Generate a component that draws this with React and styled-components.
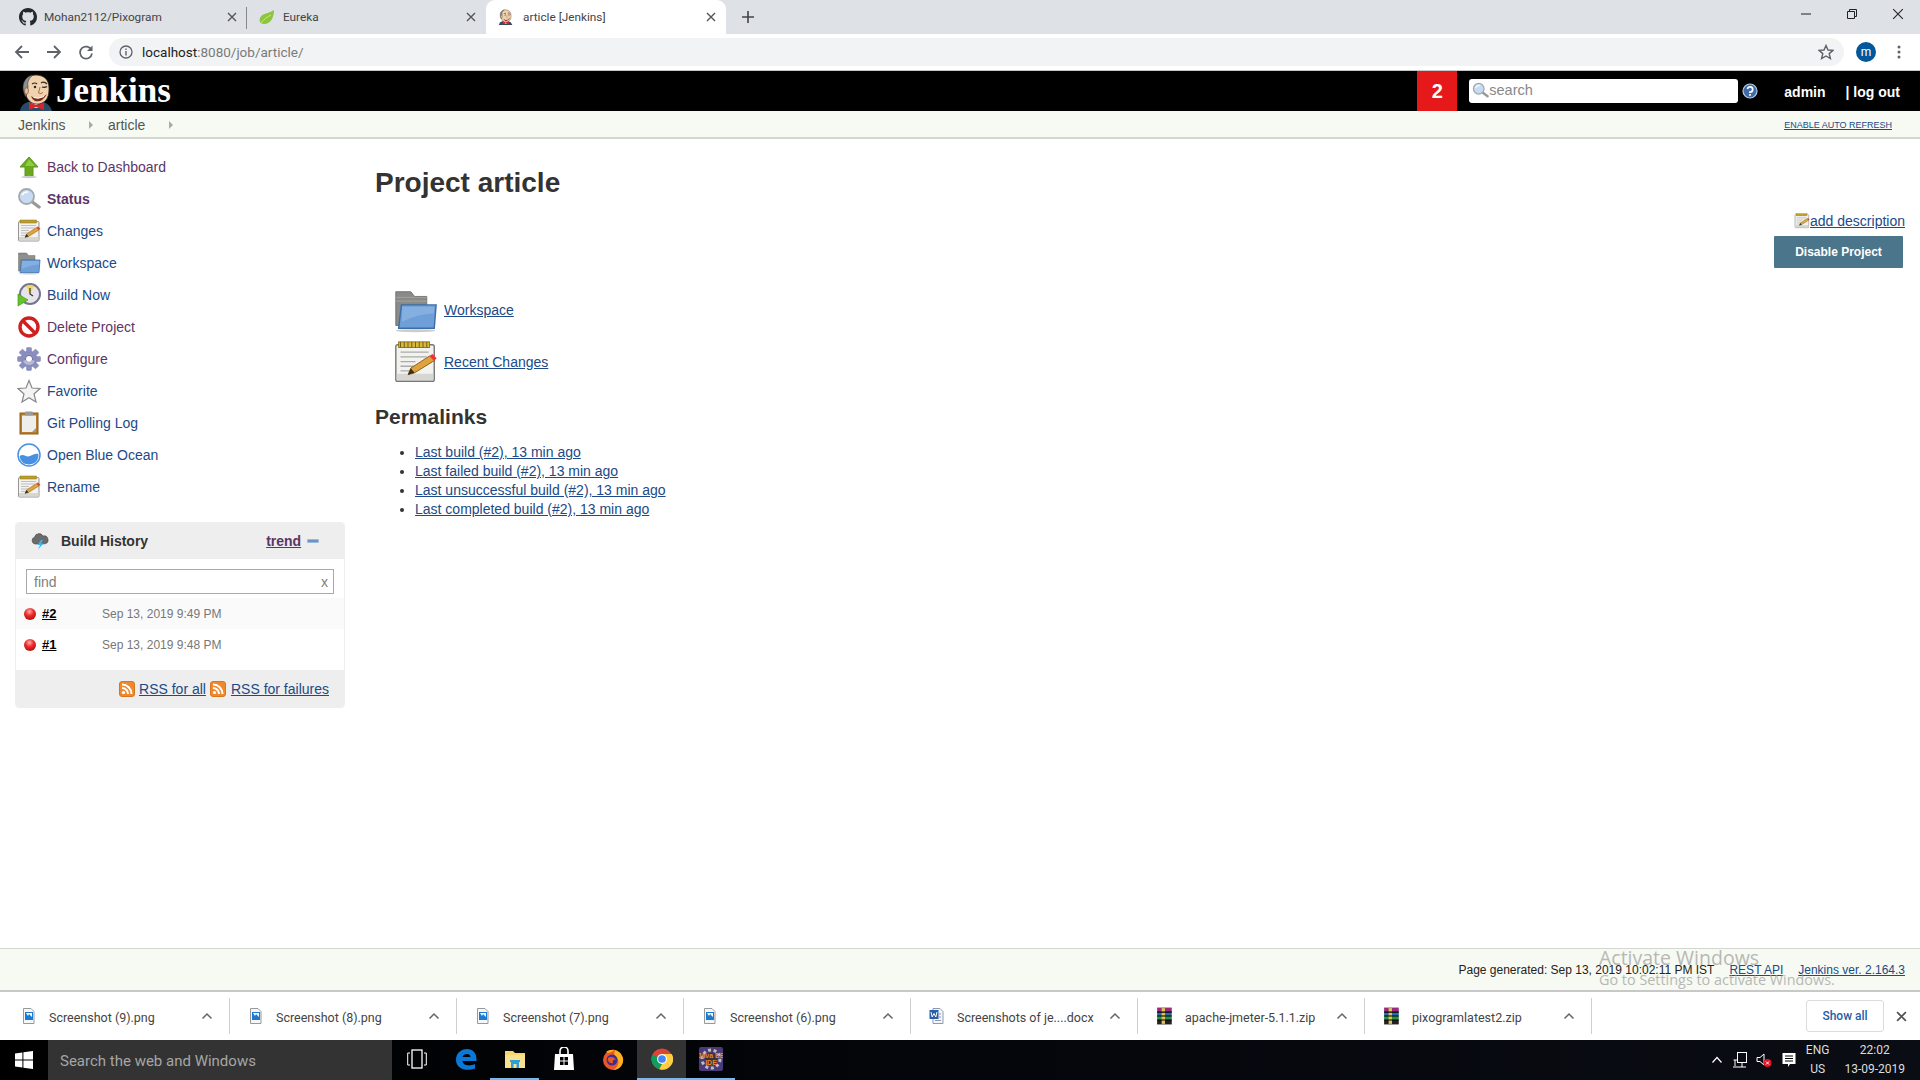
import React from 'react'
import styled, { createGlobalStyle } from 'styled-components'

const GlobalStyle = createGlobalStyle`
  html, body {
    margin: 0;
    padding: 0;
    background: #fff;
  }
  * {
    box-sizing: border-box;
  }
`

const Page = styled.div`
  position: relative;
  width: 1920px;
  height: 1080px;
  overflow: hidden;
  display: flex;
  flex-direction: column;
  font-family: "Liberation Sans", Arial, sans-serif;
  font-size: 14px;
  color: #333;
`

// browser chrome
const TabStrip = styled.div`
  height: 34px;
  flex: none;
  display: flex;
  align-items: stretch;
  background: #dee1e6;
  font-family: Roboto, "Open Sans", sans-serif;
  font-size: 11.8px;
  color: #444;
`
const Tab = styled.div`
  width: ${props => props.width}px;
  flex: none;
  display: flex;
  align-items: center;
  gap: ${props => props.gap}px;
  padding: 0 10px 0 ${props => props.pad}px;
  background: ${props => props.active ? '#fff' : 'transparent'};
  border-radius: ${props => props.active ? '9px 9px 0 0' : '0'};
  position: relative;
  &::after {
    content: '';
    display: ${props => props.divider ? 'block' : 'none'};
    position: absolute;
    right: 0;
    top: 7px;
    bottom: 5px;
    width: 1px;
    background: #888;
  }
`
const TabTitle = styled.span`
  flex: 1;
  white-space: nowrap;
`
const NewTab = styled.div`
  width: 44px;
  display: flex;
  align-items: center;
  justify-content: center;
`
const WindowControls = styled.div`
  margin-left: auto;
  display: flex;
  align-items: center;
  gap: 34px;
  padding: 0 16px 6px 0;
`
const Toolbar = styled.div`
  height: 37px;
  flex: none;
  display: flex;
  align-items: center;
  background: #fff;
  border-bottom: 1px solid #c8c8c8;
  padding-left: 14px;
`
const NavButtons = styled.div`
  display: flex;
  gap: 16px;
  align-items: center;
`
const Omnibox = styled.div`
  width: 1735px;
  height: 28px;
  margin-left: 15px;
  border-radius: 14px;
  background: #f1f3f4;
  display: flex;
  align-items: center;
  padding: 0 10px 0 10px;
  font-family: Roboto, "Open Sans", sans-serif;
  font-size: 13.5px;
  color: #7a7a7a;
`
const Host = styled.span`
  color: #222;
  margin-left: 9px;
`
const OmniStar = styled.span`
  margin-left: auto;
  display: flex;
`
const Avatar = styled.div`
  width: 20px;
  height: 20px;
  border-radius: 50%;
  margin-left: 12px;
  flex: none;
  background: #01579b;
  color: #fff;
  font-family: Roboto, sans-serif;
  font-size: 12px;
  display: flex;
  align-items: center;
  justify-content: center;
`
const Dots = styled.div`
  margin-left: 21px;
  display: flex;
`

// jenkins header
const Header = styled.header`
  height: 40px;
  flex: none;
  background: #000;
  display: flex;
  align-items: stretch;
  padding-left: 18px;
  color: #fff;
`
const Logo = styled.div`
  display: flex;
  align-items: flex-end;
`
const LogoTitle = styled.span`
  font-family: "Liberation Serif", serif;
  font-weight: 700;
  font-size: 35px;
  line-height: 40px;
  align-self: center;
`
const HeaderRight = styled.div`
  margin-left: auto;
  display: flex;
  align-items: center;
  height: 100%;
`
const Badge = styled.div`
  width: 40px;
  height: 100%;
  background: #e51919;
  font-weight: 700;
  font-size: 20px;
  display: flex;
  align-items: center;
  justify-content: center;
`
const SearchBox = styled.div`
  width: 269px;
  height: 24px;
  margin-left: 12px;
  background: #fff;
  border-radius: 3px;
  display: flex;
  align-items: center;
  gap: 0;
  padding: 0 0 2px 3px;
  color: #888;
  font-size: 14.5px;
`
const HelpIcon = styled.span`
  display: flex;
  margin-left: 4px;
`
const UserLink = styled.span`
  font-weight: 700;
  font-size: 14px;
  margin-left: ${props => props.left}px;
  padding-top: 2px;
`
const LogOut = styled(UserLink)`
  margin-right: 20px;
`
const Breadcrumbs = styled.nav`
  height: 28px;
  flex: none;
  background: #f6faf2;
  border-bottom: 2px solid #d3d7cf;
  display: flex;
  align-items: center;
  padding: 1px 28px 0 18px;
  color: #555;
`
const Crumb = styled.span`
  width: ${props => props.width}px;
  display: flex;
  align-items: center;
  justify-content: space-between;
  margin-right: ${props => props.gap}px;
`
const Arrow = styled.span`
  width: 0;
  height: 0;
  border-left: 4px solid #aaa;
  border-top: 4px solid transparent;
  border-bottom: 4px solid transparent;
`
const AutoRefresh = styled.a`
  margin-left: auto;
  font-size: 9px;
  color: #204a87;
  text-decoration: underline;
`

// page body
const Body = styled.div`
  flex: 1;
  display: flex;
  min-height: 0;
`
const Sidebar = styled.aside`
  width: 360px;
  flex: none;
  padding: 12px 0 0 15px;
`
const TaskList = styled.div`
  display: flex;
  flex-direction: column;
`
const Task = styled.a`
  height: 32px;
  display: flex;
  align-items: center;
  gap: 6px;
  padding-left: 2px;
  color: ${props => props.visited ? '#5c3566' : '#204a87'};
  font-weight: ${props => props.bold ? 700 : 400};
`
const HistoryPanel = styled.section`
  width: 330px;
  margin-top: 19px;
  border: 1px solid #eee;
  border-radius: 4px;
  overflow: hidden;
`
const HistoryHead = styled.div`
  height: 36px;
  background: #eee;
  display: flex;
  align-items: center;
  padding: 0 0 1px 15px;
  font-weight: 700;
`
const HistoryTitle = styled.span`
  margin-left: 12px;
  color: #333;
`
const Trend = styled.a`
  margin-left: 118px;
  color: #5c3566;
  text-decoration: underline;
`
const Collapse = styled.span`
  width: 12px;
  height: 4px;
  margin-left: 6px;
  border-radius: 1px;
  background: #6a94c4;
  border: 1px solid #9db8d8;
`
const FindRow = styled.div`
  padding: 10px 10px 4px;
`
const FindBox = styled.div`
  height: 25px;
  border: 1px solid #aaa;
  display: flex;
  align-items: center;
  justify-content: space-between;
  padding: 0 5px 0 7px;
  color: #808080;
`
const BuildRow = styled.div`
  height: ${props => props.size}px;
  background: ${props => props.shaded ? '#fafafa' : '#fff'};
  display: flex;
  align-items: center;
  padding-left: 7px;
`
const BuildNumber = styled.a`
  width: 60px;
  margin-left: 5px;
  color: #000;
  font-size: 13px;
  font-weight: 700;
  text-decoration: underline;
`
const BuildDate = styled.span`
  font-size: 12px;
  color: #777;
`
const HistoryFoot = styled.div`
  height: 37px;
  margin-top: 10px;
  background: #eee;
  display: flex;
  align-items: center;
  justify-content: flex-end;
  padding-right: 15px;
  gap: 4px;
`
const Link = styled.a`
  color: #204a87;
  text-decoration: underline;
`
const RssLink = styled(Link)`
  margin-left: 1px;
`
const Content = styled.main`
  flex: 1;
  padding: 25px 15px 0 15px;
  display: flex;
  justify-content: space-between;
`
const Title = styled.h1`
  margin: 0;
  font-size: 28px;
  line-height: 38px;
  color: #333;
  font-weight: 700;
`
const ProjectLinks = styled.div`
  margin-top: 82px;
  padding-left: 18px;
  display: flex;
  flex-direction: column;
`
const ProjectLink = styled.div`
  height: ${props => props.size}px;
  display: flex;
  align-items: center;
  gap: 6px;
`
const Subtitle = styled.h2`
  margin: 15px 0 0;
  font-size: 21px;
  line-height: 28px;
  font-weight: 700;
  color: #333;
`
const Permalinks = styled.ul`
  margin: 12px 0 0;
  padding: 0 0 0 40px;
  li {
    line-height: 19px;
  }
`
const Actions = styled.div`
  display: flex;
  flex-direction: column;
  align-items: flex-end;
  padding-top: 46px;
`
const AddDescription = styled.div`
  display: flex;
  align-items: center;
  height: 22px;
`
const DisableButton = styled.button`
  width: 129px;
  height: 32px;
  margin: 4px 2px 0 0;
  border: 0;
  border-radius: 1px;
  background: #4b758b;
  color: #fff;
  font-family: inherit;
  font-weight: 700;
  font-size: 12px;
`

// footer
const Footer = styled.footer`
  height: 44px;
  flex: none;
  background: #f6faf2;
  border-top: 1px solid #d3d7cf;
  border-bottom: 2px solid #c8c8c8;
  display: flex;
  align-items: center;
  justify-content: flex-end;
  gap: 15px;
  padding: 0 15px 0 0;
  font-size: 12px;
  color: #222;
`
const Watermark = styled.div`
  position: absolute;
  left: 1599px;
  top: 946px;
  color: #a3a3a3;
  opacity: 0.75;
  font-family: "Open Sans", sans-serif;
  font-size: 19.5px;
  line-height: 24px;
  span {
    display: block;
    margin-top: 2px;
    font-size: 14.4px;
    line-height: 16px;
  }
`

// downloads shelf
const Shelf = styled.div`
  height: 48px;
  flex: none;
  background: #fff;
  display: flex;
  align-items: center;
  font-family: Roboto, "Open Sans", sans-serif;
  font-size: 12.5px;
  color: #444;
  padding-left: 3px;
`
const ShelfItem = styled.div`
  width: 227px;
  height: 36px;
  flex: none;
  display: flex;
  align-items: center;
  padding: 0 16px 0 18px;
  border-right: 1px solid #d0d0d0;
`
const ShelfName = styled.span`
  margin-left: ${props => props.gap}px;
  padding-top: 2px;
  flex: 1;
  white-space: nowrap;
`
const ShowAll = styled.button`
  width: 78px;
  height: 32px;
  margin-left: auto;
  background: #fff;
  border: 1px solid #dadce0;
  border-radius: 3px;
  color: #1f5fa8;
  font-family: Roboto, sans-serif;
  font-size: 12px;
  font-weight: 500;
`
const ShelfClose = styled.span`
  display: flex;
  margin: 0 13px 0 12px;
`

// taskbar
const Taskbar = styled.div`
  height: 40px;
  flex: none;
  background: linear-gradient(90deg, #000 0%, #05070d 60%, #0b0d14 100%);
  display: flex;
  align-items: stretch;
  color: #ddd;
  font-family: Roboto, "Open Sans", sans-serif;
`
const StartButton = styled.div`
  width: 48px;
  display: flex;
  align-items: center;
  justify-content: center;
`
const TaskSearch = styled.div`
  width: 344px;
  background: #333;
  color: #a6a6a6;
  font-size: 15px;
  display: flex;
  align-items: center;
  padding: 1px 0 0 12px;
`
const TaskApp = styled.div`
  width: 49px;
  display: flex;
  align-items: center;
  justify-content: center;
  background: ${props => props.active ? '#333' : 'transparent'};
  border-bottom: ${props => props.running ? '2px solid #76b9ed' : '2px solid transparent'};
`
const Tray = styled.div`
  margin-left: auto;
  display: flex;
  align-items: center;
  padding-right: 15px;
`
const TrayIcon = styled.span`
  display: flex;
  margin-left: ${props => props.left}px;
`
const TrayText = styled.div`
  font-size: 12px;
  line-height: 19px;
  text-align: center;
  margin-left: ${props => props.left}px;
  white-space: nowrap;
`

/* ---- drawn icons ---- */
const Icon = ({ size = 24, box = 24, children }) => (
  <svg width={size} height={size} viewBox={`0 0 ${box} ${box}`} style={{ display: 'block', flex: 'none' }}>
    {children}
  </svg>
)

const ArrowUpIcon = () => (
  <Icon>
    <path d="M12 2 L21 12 H16 V21 H8 V12 H3 Z" fill="#6aa820" stroke="#5a9a18" />
    <path d="M12 4 L18 11 H8 Z" fill="#8ccf3c" />
    <ellipse cx="12" cy="22" rx="8" ry="1.2" fill="#ccc" />
  </Icon>
)
const SearchIcon = ({ size = 24 }) => (
  <Icon size={size}>
    <path d="M14 14 L22 20" stroke="#999" strokeWidth="3.4" strokeLinecap="round" />
    <circle cx="9.5" cy="9.5" r="7.5" fill="#c7dcf2" stroke="#a3a8ad" strokeWidth="1.8" />
    <path d="M5 8 Q7 4.5 11 5" stroke="#fff" strokeWidth="1.6" fill="none" />
  </Icon>
)
const NotepadIcon = ({ size = 24 }) => (
  <Icon size={size} box={48}>
    <rect x="3" y="5" width="41" height="39" rx="2" fill="#f2f2ee" stroke="#777" strokeWidth="1.5" />
    <rect x="4" y="36" width="39" height="7" fill="#d6d6d2" />
    <rect x="6" y="2" width="33" height="6" fill="#d7b73c" stroke="#8d7310" />
    <path d="M8 2 V8 M12 2 V8 M16 2 V8 M20 2 V8 M24 2 V8 M28 2 V8 M32 2 V8 M36 2 V8" stroke="#6d5a10" strokeWidth="1" />
    <path d="M8 13 H38 M8 18 H36 M8 23 H24 M8 28 H26 M8 33 H20" stroke="#aaa" strokeWidth="1.4" />
    <path d="M16 37 L19 30 L39 17 L44 22 L23 35 Z" fill="#e0a23c" stroke="#8f5a14" />
    <path d="M39 17 L44 22 L46.5 19.5 L42 15 Z" fill="#e33" />
    <path d="M16 37 L19 30 L23 35 Z" fill="#332" />
  </Icon>
)
const FolderIcon = ({ size = 24 }) => (
  <Icon size={size} box={48}>
    <path d="M3 4 H19 L23 9 H36 V40 H3 Z" fill="#8a8a88" stroke="#6f6f6d" />
    <path d="M3 10 H36 M3 14 H36" stroke="#a3a3a1" />
    <path d="M9 18 H46 L44 43 H6 Z" fill="#6f9fd8" stroke="#3a6ea5" strokeWidth="1.5" />
    <path d="M10 20 H44 L43.6 27 Q26 28 9.5 36 Z" fill="#85afdf" />
    <ellipse cx="24" cy="45.5" rx="21" ry="1.6" fill="#ccc" />
  </Icon>
)
const ClockIcon = () => (
  <Icon>
    <circle cx="13" cy="11" r="10" fill="#e7e5ea" stroke="#77748f" strokeWidth="2" />
    <path d="M13 11 L9 3 A9 9 0 0 1 17 3 Z" fill="#f0d860" />
    <path d="M13 5 V11 L16 13" stroke="#333" strokeWidth="1.2" fill="none" />
    <path d="M1 11 L11 17 L1 23 Z" fill="#64c32a" stroke="#4d9a1e" strokeWidth="0.7" />
  </Icon>
)
const NoIcon = () => (
  <Icon>
    <circle cx="12" cy="12" r="9" fill="#fff" stroke="#d11f1f" strokeWidth="3.4" />
    <path d="M6 6 L18 18" stroke="#d11f1f" strokeWidth="3.4" />
  </Icon>
)
const GearIcon = () => (
  <Icon>
    <g fill="#8b8fc0" stroke="#8084b0" strokeWidth="0.5">
      <circle cx="12" cy="12" r="8" />
      <rect x="9.5" y="0.5" width="5" height="5" rx="1" />
      <rect x="9.5" y="18.5" width="5" height="5" rx="1" />
      <rect x="0.5" y="9.5" width="5" height="5" rx="1" />
      <rect x="18.5" y="9.5" width="5" height="5" rx="1" />
      <rect x="3" y="3" width="5" height="5" rx="1" transform="rotate(45 5.5 5.5)" />
      <rect x="16" y="3" width="5" height="5" rx="1" transform="rotate(45 18.5 5.5)" />
      <rect x="3" y="16" width="5" height="5" rx="1" transform="rotate(45 5.5 18.5)" />
      <rect x="16" y="16" width="5" height="5" rx="1" transform="rotate(45 18.5 18.5)" />
    </g>
    <circle cx="12" cy="12" r="3.6" fill="#fff" stroke="#6b6e99" />
    <path d="M6 14 A6.5 6.5 0 0 0 18 14 L15 13 A3.5 3.5 0 0 1 9 13 Z" fill="#b6b8d8" />
  </Icon>
)
const StarIcon = () => (
  <Icon>
    <path d="M12 1.5 L15 9 L23 9.5 L17 15 L19 23 L12 18.8 L5 23 L7 15 L1 9.5 L9 9 Z" fill="#f4f4f4" stroke="#888" strokeWidth="1.2" />
  </Icon>
)
const ClipboardIcon = () => (
  <Icon>
    <rect x="3" y="2" width="18" height="21" fill="#b57c2c" stroke="#8e5f1e" />
    <rect x="5" y="4.5" width="14" height="16.5" fill="#eeeeea" />
    <rect x="8" y="0.5" width="8" height="4" rx="1" fill="#9a9a98" />
    <path d="M15 21 L19 17 V21 Z" fill="#999" />
  </Icon>
)
const OceanIcon = () => (
  <Icon>
    <circle cx="12" cy="12" r="11" fill="#fff" stroke="#4a90e2" strokeWidth="1.5" />
    <path d="M2.6 13 C7 10 9 15 13 13 C16 11.5 19 10 21.4 11 C22 18 17 21.5 12 21.5 C7 21.5 3 18 2.6 13 Z" fill="#4a90e2" />
  </Icon>
)
const StormIcon = () => (
  <Icon size={18} box={18}>
    <path d="M4 12 A3.5 3.5 0 0 1 3.6 5.2 A4.5 4.5 0 0 1 12 4 A3.8 3.8 0 0 1 14 11.8 Z" fill="#6b6b6b" stroke="#444" strokeWidth="0.6" />
    <path d="M10 8 L6.5 13 H9 L7 17.5 L12.5 11.5 H10 L12 8 Z" fill="#38b6f0" />
  </Icon>
)
const Ball = () => (
  <Icon size={14} box={14}>
    <defs>
      <radialGradient id="ball" cx="45%" cy="30%" r="70%">
        <stop offset="0%" stopColor="#ffb0b0" />
        <stop offset="50%" stopColor="#ee2a2a" />
        <stop offset="100%" stopColor="#b30f0f" />
      </radialGradient>
    </defs>
    <circle cx="7" cy="7" r="6" fill="url(#ball)" />
  </Icon>
)
const RssIcon = () => (
  <Icon size={16} box={16}>
    <rect x="0.5" y="0.5" width="15" height="15" rx="2.5" fill="#ee8a2d" stroke="#d9761d" />
    <circle cx="4.5" cy="11.5" r="1.6" fill="#fff" />
    <path d="M3 7 A6 6 0 0 1 9 13 M3 3.5 A9.5 9.5 0 0 1 12.5 13" stroke="#fff" strokeWidth="2" fill="none" />
  </Icon>
)
const JenkinsFace = ({ size = 38 }) => (
  <Icon size={size} box={38}>
    {/* jacket and bow tie */}
    <path d="M2 38 Q3 31 10 29 L25 29 Q32 31 34 38 Z" fill="#2c4a66" />
    <path d="M13 29 L24 29 L21 35 L16 35 Z" fill="#fff" />
    <path d="M11 29 L18 32 L26 29 L26 37 L18 34 L11 37 Z" fill="#d8252a" />
    {/* head */}
    <path d="M6 16 C5 7 11 2 18 2 C26 2 31 7 31 15 C31 22 30 29 21 31 C14 32 9 27 8 22 Z" fill="#f0d2ae" stroke="#3a2a20" strokeWidth="0.8" />
    {/* hair at the back */}
    <path d="M6 20 C3 12 7 3 15 2 C11 5 9 9 10 13 C10 16 9 18 9 20 L7.5 24 Z" fill="#8f8f8f" stroke="#333" strokeWidth="0.6" />
    <ellipse cx="8.5" cy="18" rx="2" ry="3.2" fill="#e8bd98" stroke="#6a4a36" strokeWidth="0.6" />
    {/* wink, eye and brows */}
    <path d="M14 11 Q17 9 19 11 M23 10 Q26 8 29 11" stroke="#3a2a20" strokeWidth="1.2" fill="none" />
    <circle cx="17" cy="14" r="1.2" fill="#222" />
    <path d="M24 14 Q26.5 15 29 13.5" stroke="#222" strokeWidth="1.2" fill="none" />
    <path d="M22 14 L20.5 20 Q23 21.5 25 19.5" stroke="#a9734f" fill="none" />
    <path d="M13 23 Q20 28.5 29 21 Q24 30 17 28 Q14 26.5 13 23 Z" fill="#7c2b20" />
    <path d="M15.5 24.5 Q20 26.5 26 23.5" stroke="#fff" strokeWidth="1" fill="none" />
  </Icon>
)
const Github = () => (
  <Icon size={18} box={16}>
    <path fill="#24292e" d="M8 0C3.58 0 0 3.58 0 8c0 3.54 2.29 6.53 5.47 7.59.4.07.55-.17.55-.38 0-.19-.01-.82-.01-1.49-2.01.37-2.53-.49-2.69-.94-.09-.23-.48-.94-.82-1.13-.28-.15-.68-.52-.01-.53.63-.01 1.08.58 1.23.82.72 1.21 1.87.87 2.33.66.07-.52.28-.87.51-1.07-1.78-.2-3.64-.89-3.64-3.95 0-.87.31-1.59.82-2.15-.08-.2-.36-1.02.08-2.12 0 0 .67-.21 2.2.82.64-.18 1.32-.27 2-.27s1.36.09 2 .27c1.53-1.04 2.2-.82 2.2-.82.44 1.1.16 1.92.08 2.12.51.56.82 1.27.82 2.15 0 3.07-1.87 3.75-3.65 3.95.29.25.54.73.54 1.48 0 1.07-.01 1.93-.01 2.2 0 .21.15.46.55.38A8.01 8.01 0 0 0 16 8c0-4.42-3.58-8-8-8z" />
  </Icon>
)
const Leaf = () => (
  <Icon size={16} box={16}>
    <path d="M15 1 C15 8 12 15 5 15 C1 15 0 12 1 9 C3 4 9 5 15 1 Z" fill="#8cc63f" />
    <path d="M2 14 C5 10 8 8 12 6" stroke="#d5e66b" fill="none" />
  </Icon>
)
const Cross = ({ size = 10, color = '#555', width = 1.4 }) => (
  <Icon size={size} box={10}>
    <path d="M1 1 L9 9 M9 1 L1 9" stroke={color} strokeWidth={width} />
  </Icon>
)
const PlusIcon = () => (
  <Icon size={12} box={12}>
    <path d="M6 0 V12 M0 6 H12" stroke="#444" strokeWidth="1.6" />
  </Icon>
)
const BackIcon = () => (
  <Icon size={16} box={16}>
    <path d="M15 8 H2 M8 2 L2 8 L8 14" stroke="#5f6368" strokeWidth="1.8" fill="none" />
  </Icon>
)
const ForwardIcon = () => (
  <Icon size={16} box={16}>
    <path d="M1 8 H14 M8 2 L14 8 L8 14" stroke="#5f6368" strokeWidth="1.8" fill="none" />
  </Icon>
)
const ReloadIcon = () => (
  <Icon size={16} box={16}>
    <path d="M13.5 6 A6 6 0 1 0 14 9.5" stroke="#5f6368" strokeWidth="1.7" fill="none" />
    <path d="M14.5 1.5 V7 H9 Z" fill="#5f6368" />
  </Icon>
)
const InfoIcon = () => (
  <Icon size={14} box={14}>
    <circle cx="7" cy="7" r="6" fill="none" stroke="#5f6368" strokeWidth="1.3" />
    <path d="M7 6 V10.5 M7 3.5 V5" stroke="#5f6368" strokeWidth="1.4" />
  </Icon>
)
const BookmarkStar = () => (
  <Icon size={16} box={16}>
    <path d="M8 1.5 L10 6 L15 6.4 L11.2 9.6 L12.4 14.5 L8 12 L3.6 14.5 L4.8 9.6 L1 6.4 L6 6 Z" fill="none" stroke="#5f6368" strokeWidth="1.4" />
  </Icon>
)
const MinIcon = () => (
  <Icon size={12} box={12}>
    <path d="M1 6 H11" stroke="#222" strokeWidth="1" />
  </Icon>
)
const RestoreIcon = () => (
  <Icon size={12} box={12}>
    <path d="M1.5 3.5 H8.5 V10.5 H1.5 Z M3.5 3.5 V1.5 H10.5 V8.5 H8.5" stroke="#222" fill="none" />
  </Icon>
)
const Help = () => (
  <Icon size={16} box={16}>
    <circle cx="8" cy="8" r="7" fill="#3f6aa8" stroke="#b9cbe3" strokeWidth="1.2" />
    <path d="M5.5 6 A2.6 2.6 0 1 1 8 9 V10" stroke="#fff" strokeWidth="1.7" fill="none" />
    <rect x="7.1" y="11" width="1.8" height="1.8" fill="#fff" />
  </Icon>
)
const FileIcon = () => (
  <Icon size={16} box={16}>
    <path d="M2.5 0.5 H10 L13 3.5 V15.5 H2.5 Z" fill="#f6f6f6" stroke="#999" />
    <rect x="4" y="4" width="8" height="8" fill="#1a7ad4" />
    <path d="M5 5 L7 8 L8 6 L11 9 V5 Z" fill="#fff" />
  </Icon>
)
const WordIcon = () => (
  <Icon size={16} box={16}>
    <path d="M4 0.5 H11 L14 3.5 V15.5 H4 Z" fill="#f6f6f6" stroke="#8a9bb8" />
    <rect x="0.5" y="2" width="9" height="9" fill="#2b5faa" />
    <path d="M2 4 L3.2 9 L5 5.5 L6.8 9 L8 4" stroke="#fff" fill="none" />
    <path d="M6 12.5 H12 M10 6 H12 M10 9 H12" stroke="#8a9bb8" />
  </Icon>
)
const ZipIcon = () => (
  <Icon size={18} box={16}>
    <rect x="1" y="0.5" width="13" height="4" fill="#9c2a78" />
    <rect x="1" y="4.5" width="13" height="3.5" fill="#2c6ab0" />
    <rect x="1" y="8" width="13" height="3.5" fill="#2f8f4a" />
    <rect x="1" y="11.5" width="13" height="4" fill="#222" />
    <rect x="5" y="1" width="3" height="14" fill="#d9c45a" />
    <path d="M1 4.5 H14 M1 8 H14 M1 11.5 H14" stroke="#000" />
  </Icon>
)
const Chevron = () => (
  <Icon size={12} box={12}>
    <path d="M1.5 8.5 L6 4 L10.5 8.5" stroke="#666" strokeWidth="1.5" fill="none" />
  </Icon>
)
const WinLogo = () => (
  <Icon size={18} box={18}>
    <path d="M0 2.6 L7.4 1.5 V8.5 H0 Z M8.4 1.3 L18 0 V8.5 H8.4 Z M0 9.5 H7.4 V16.5 L0 15.4 Z M8.4 9.5 H18 V18 L8.4 16.7 Z" fill="#fff" />
  </Icon>
)
const TaskView = () => (
  <Icon size={20} box={20}>
    <rect x="5" y="1" width="10" height="18" fill="none" stroke="#fff" strokeWidth="1.3" />
    <path d="M3 4 H0.7 V16 H3 M17 4 H19.3 V16 H17" fill="none" stroke="#fff" />
  </Icon>
)
const EdgeIcon = () => (
  <Icon>
    <path d="M2 13 C2 6 7 2 13 2 C19 2 23 6 22.5 14 H8.5 C8.8 18 14 20 21 17 V21.5 C12 25 2 21.5 2 13 Z M8.5 10 H16.5 C16.5 6 9.5 5.8 8.5 10 Z" fill="#0a78d7" fillRule="evenodd" />
  </Icon>
)
const ExplorerIcon = () => (
  <Icon>
    <path d="M2 4 H10 L12 6 H22 V21 H2 Z" fill="#f5d76e" />
    <rect x="2" y="8" width="20" height="13" fill="#f9e28e" />
    <path d="M8 21 V14 H16 V21 H13.5 V17 H10.5 V21 Z" fill="#2d9fd8" />
    <rect x="7" y="13" width="10" height="2" fill="#2d9fd8" />
  </Icon>
)
const StoreIcon = () => (
  <Icon>
    <path d="M3 7 H21 L22 23 H2 Z" fill="#fff" />
    <path d="M8 7 V4 A4 4 0 0 1 16 4 V7" stroke="#fff" strokeWidth="1.6" fill="none" />
    <path d="M8 10 H11.5 V13.5 H8 Z M12.5 10 H16 V13.5 H12.5 Z M8 14.5 H11.5 V18 H8 Z M12.5 14.5 H16 V18 H12.5 Z" fill="#000" />
  </Icon>
)
const FirefoxIcon = () => (
  <Icon>
    <circle cx="12" cy="13" r="10" fill="#e8562a" />
    <path d="M5 5 C10 1 19 2 22 11 C23 17 19 23 12 23 C18 20 19 13 15 10 C13 8 13 6 14 3 C10 5 8 7 5 5 Z" fill="#ffb11f" />
    <circle cx="11" cy="13" r="5.5" fill="#3c2f8f" />
    <path d="M7 11 C10 9 13 10 15 13 C13 12 11 13 12 16 C9 17 6 14 7 11 Z" fill="#e8562a" />
  </Icon>
)
const ChromeIcon = () => (
  <Icon size={22} box={24}>
    <circle cx="12" cy="12" r="11.5" fill="#db4437" />
    <path d="M12 12 L1.6 7 A11.5 11.5 0 0 0 9 23.1 L15 12 Z" fill="#0f9d58" />
    <path d="M12 6.5 H22.6 A11.5 11.5 0 0 1 9 23.1 L15 12 Z" fill="#ffcd40" />
    <circle cx="12" cy="12" r="5.4" fill="#fff" />
    <circle cx="12" cy="12" r="4.2" fill="#4285f4" />
  </Icon>
)
const EclipseIcon = () => (
  <Icon>
    <rect width="24" height="24" rx="2" fill="#4a3a78" />
    <circle cx="12" cy="12" r="9" fill="none" stroke="#bdbdbd" strokeWidth="3" strokeDasharray="3 2.6" />
    <circle cx="12" cy="12" r="6" fill="#333" />
    <text x="12" y="11" textAnchor="middle" fontFamily="Liberation Sans" fontSize="7" fontWeight="700" fill="#e8862a">Java EE</text>
    <text x="12" y="18" textAnchor="middle" fontFamily="Liberation Sans" fontSize="7" fontWeight="700" fill="#e8862a">IDE</text>
  </Icon>
)
const TrayChevron = () => (
  <Icon size={12} box={12}>
    <path d="M1.5 8.5 L6 3.5 L10.5 8.5" stroke="#fff" strokeWidth="1.2" fill="none" />
  </Icon>
)
const NetworkIcon = () => (
  <Icon size={16} box={16}>
    <rect x="4.5" y="0.5" width="9" height="10" fill="none" stroke="#fff" />
    <path d="M0.5 8 H4.5 M2 8 V14 M0 15 H13 M9 11 V15" stroke="#fff" />
  </Icon>
)
const VolumeIcon = () => (
  <Icon size={16} box={16}>
    <path d="M1 5.5 H4 L8 2 V13 L4 9.5 H1 Z" fill="none" stroke="#fff" />
    <circle cx="11.5" cy="11" r="4" fill="#e81123" />
    <path d="M10 9.5 L13 12.5 M13 9.5 L10 12.5" stroke="#fff" />
  </Icon>
)
const ActionCenter = () => (
  <Icon size={16} box={16}>
    <path d="M1.5 1 H14.5 V12 H9 L7 15 V12 H1.5 Z" fill="#fff" />
    <path d="M4 4 H12 M4 6.5 H12 M4 9 H12" stroke="#000" />
  </Icon>
)

const tasks = [
  { label: 'Back to Dashboard', icon: <ArrowUpIcon />, visited: true },
  { label: 'Status', icon: <SearchIcon />, visited: true, bold: true },
  { label: 'Changes', icon: <NotepadIcon /> },
  { label: 'Workspace', icon: <FolderIcon /> },
  { label: 'Build Now', icon: <ClockIcon /> },
  { label: 'Delete Project', icon: <NoIcon />, visited: true },
  { label: 'Configure', icon: <GearIcon />, visited: true },
  { label: 'Favorite', icon: <StarIcon /> },
  { label: 'Git Polling Log', icon: <ClipboardIcon /> },
  { label: 'Open Blue Ocean', icon: <OceanIcon /> },
  { label: 'Rename', icon: <NotepadIcon /> },
]

const downloads = [
  { name: 'Screenshot (9).png', icon: <FileIcon />, gap: 12 },
  { name: 'Screenshot (8).png', icon: <FileIcon />, gap: 12 },
  { name: 'Screenshot (7).png', icon: <FileIcon />, gap: 12 },
  { name: 'Screenshot (6).png', icon: <FileIcon />, gap: 12 },
  { name: 'Screenshots of je....docx', icon: <WordIcon />, gap: 12 },
  { name: 'apache-jmeter-5.1.1.zip', icon: <ZipIcon />, gap: 11 },
  { name: 'pixogramlatest2.zip', icon: <ZipIcon />, gap: 11 },
]

const permalinks = [
  'Last build (#2), 13 min ago',
  'Last failed build (#2), 13 min ago',
  'Last unsuccessful build (#2), 13 min ago',
  'Last completed build (#2), 13 min ago',
]

const App = () => (
  <Page>
    <GlobalStyle />

    <TabStrip>
      <Tab width={247} pad={19} gap={7} divider>
        <Github />
        <TabTitle>Mohan2112/Pixogram</TabTitle>
        <Cross />
      </Tab>
      <Tab width={239} pad={12} gap={8}>
        <Leaf />
        <TabTitle>Eureka</TabTitle>
        <Cross />
      </Tab>
      <Tab width={240} pad={12} gap={9} active>
        <JenkinsFace size={16} />
        <TabTitle>article [Jenkins]</TabTitle>
        <Cross />
      </Tab>
      <NewTab><PlusIcon /></NewTab>
      <WindowControls>
        <MinIcon />
        <RestoreIcon />
        <Cross size={12} color="#222" width={0.9} />
      </WindowControls>
    </TabStrip>

    <Toolbar>
      <NavButtons>
        <BackIcon />
        <ForwardIcon />
        <ReloadIcon />
      </NavButtons>
      <Omnibox>
        <InfoIcon />
        <Host>localhost</Host>:8080/job/article/
        <OmniStar><BookmarkStar /></OmniStar>
      </Omnibox>
      <Avatar>m</Avatar>
      <Dots>
        <svg width="4" height="14" viewBox="0 0 4 14">
          <circle cx="2" cy="2" r="1.5" fill="#5f6368" />
          <circle cx="2" cy="7" r="1.5" fill="#5f6368" />
          <circle cx="2" cy="12" r="1.5" fill="#5f6368" />
        </svg>
      </Dots>
    </Toolbar>

    <Header>
      <Logo>
        <JenkinsFace />
        <LogoTitle>Jenkins</LogoTitle>
      </Logo>
      <HeaderRight>
        <Badge>2</Badge>
        <SearchBox>
          <SearchIcon size={17} />
          search
        </SearchBox>
        <HelpIcon><Help /></HelpIcon>
        <UserLink left={26}>admin</UserLink>
        <LogOut left={20}>| log out</LogOut>
      </HeaderRight>
    </Header>

    <Breadcrumbs>
      <Crumb width={75} gap={15}>Jenkins<Arrow /></Crumb>
      <Crumb width={65} gap={0}>article<Arrow /></Crumb>
      <AutoRefresh>ENABLE AUTO REFRESH</AutoRefresh>
    </Breadcrumbs>

    <Body>
      <Sidebar>
        <TaskList>
          {tasks.map(task => (
            <Task key={task.label} visited={task.visited} bold={task.bold}>
              {task.icon}
              {task.label}
            </Task>
          ))}
        </TaskList>

        <HistoryPanel>
          <HistoryHead>
            <StormIcon />
            <HistoryTitle>Build History</HistoryTitle>
            <Trend>trend</Trend>
            <Collapse />
          </HistoryHead>
          <FindRow>
            <FindBox>find<span>x</span></FindBox>
          </FindRow>
          <BuildRow size={31} shaded>
            <Ball />
            <BuildNumber>#2</BuildNumber>
            <BuildDate>Sep 13, 2019 9:49 PM</BuildDate>
          </BuildRow>
          <BuildRow size={31}>
            <Ball />
            <BuildNumber>#1</BuildNumber>
            <BuildDate>Sep 13, 2019 9:48 PM</BuildDate>
          </BuildRow>
          <HistoryFoot>
            <RssIcon />
            <Link>RSS for all</Link>
            <RssIcon />
            <RssLink>RSS for failures</RssLink>
          </HistoryFoot>
        </HistoryPanel>
      </Sidebar>

      <Content>
        <div>
          <Title>Project article</Title>
          <ProjectLinks>
            <ProjectLink size={52}>
              <FolderIcon size={45} />
              <Link>Workspace</Link>
            </ProjectLink>
            <ProjectLink size={52}>
              <NotepadIcon size={45} />
              <Link>Recent Changes</Link>
            </ProjectLink>
          </ProjectLinks>
          <Subtitle>Permalinks</Subtitle>
          <Permalinks>
            {permalinks.map(item => (
              <li key={item}><Link>{item}</Link></li>
            ))}
          </Permalinks>
        </div>
        <Actions>
          <AddDescription>
            <NotepadIcon size={16} />
            <Link>add description</Link>
          </AddDescription>
          <DisableButton>Disable Project</DisableButton>
        </Actions>
      </Content>
    </Body>

    <Footer>
      <span>Page generated: Sep 13, 2019 10:02:11 PM IST</span>
      <Link>REST API</Link>
      <Link>Jenkins ver. 2.164.3</Link>
    </Footer>
    <Watermark>
      Activate Windows
      <span>Go to Settings to activate Windows.</span>
    </Watermark>

    <Shelf>
      {downloads.map(file => (
        <ShelfItem key={file.name}>
          {file.icon}
          <ShelfName gap={file.gap}>{file.name}</ShelfName>
          <Chevron />
        </ShelfItem>
      ))}
      <ShowAll>Show all</ShowAll>
      <ShelfClose><Cross size={11} color="#555" width={1.6} /></ShelfClose>
    </Shelf>

    <Taskbar>
      <StartButton><WinLogo /></StartButton>
      <TaskSearch>Search the web and Windows</TaskSearch>
      <TaskApp><TaskView /></TaskApp>
      <TaskApp><EdgeIcon /></TaskApp>
      <TaskApp running><ExplorerIcon /></TaskApp>
      <TaskApp><StoreIcon /></TaskApp>
      <TaskApp><FirefoxIcon /></TaskApp>
      <TaskApp active running><ChromeIcon /></TaskApp>
      <TaskApp running><EclipseIcon /></TaskApp>
      <Tray>
        <TrayIcon left={0}><TrayChevron /></TrayIcon>
        <TrayIcon left={10}><NetworkIcon /></TrayIcon>
        <TrayIcon left={7}><VolumeIcon /></TrayIcon>
        <TrayIcon left={9}><ActionCenter /></TrayIcon>
        <TrayText left={9}>ENG<br />US</TrayText>
        <TrayText left={15}>22:02<br />13-09-2019</TrayText>
      </Tray>
    </Taskbar>
  </Page>
)

export default App
